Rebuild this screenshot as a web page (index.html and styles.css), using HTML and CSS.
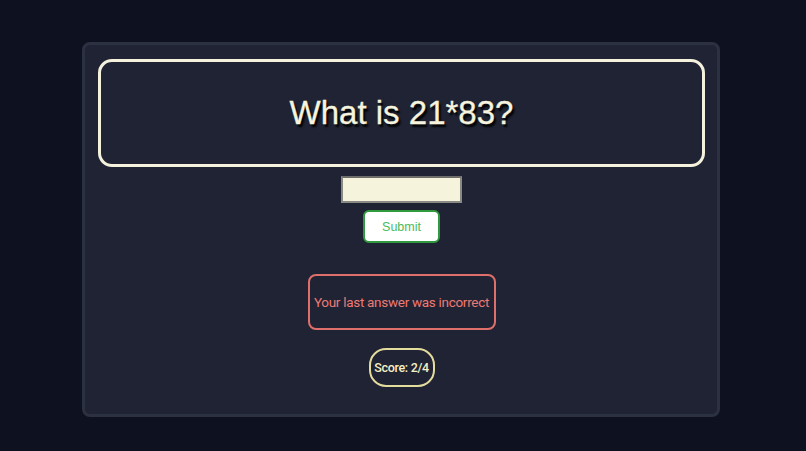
FILE: index.html
```html
<!DOCTYPE html>
<html>
<head>
<meta charset="utf-8">
<link rel="stylesheet" href="styles.css">
</head>
<body>
<main class="card">
  <div class="question"><h1>What is 21*83?</h1></div>
  <input class="answer" type="text">
  <button class="submit">Submit</button>
  <div class="feedback">Your last answer was incorrect</div>
  <div class="score">Score: 2/4</div>
</main>
</body>
</html>
```
FILE: styles.css
```css
html, body {
  margin: 0;
  padding: 0;
  background: #0e1120;
  height: 100%;
}
body {
  padding-top: 42px;
  box-sizing: border-box;
}
.card {
  box-sizing: border-box;
  width: 638px;
  height: 375px;
  margin: 0 0 0 82px;
  background: #1f2334;
  border: 3px solid #2c3142;
  border-radius: 8px;
  padding: 14px 12px 0 13px;
  display: flex;
  flex-direction: column;
  align-items: center;
}
.question {
  box-sizing: border-box;
  width: 607px;
  height: 108px;
  border: 3px solid #f4f1dc;
  border-radius: 14px;
  display: flex;
  align-items: center;
  justify-content: center;
}
.question h1 {
  margin: 0;
  font-family: "Liberation Sans", Arial, sans-serif;
  font-weight: normal;
  font-size: 33px;
  color: #f6f3de;
  text-shadow: 2px 3px 2px #000;
  -webkit-text-stroke: 0.3px #f6f3de;
}
.answer {
  box-sizing: border-box;
  margin-top: 9px;
  width: 121px;
  height: 27px;
  background: #f6f3dc;
  border: 2px solid #8a8a84;
  border-top-color: #6e6e6a;
  padding: 0 4px;
}
.submit {
  box-sizing: border-box;
  margin-top: 7px;
  width: 77px;
  height: 33px;
  background: #fff;
  border: 2px solid #2f9a3e;
  border-radius: 6px;
  color: #4cbb5a;
  font-family: "Liberation Sans", Arial, sans-serif;
  font-size: 12.5px;
}
.feedback {
  box-sizing: border-box;
  margin-top: 31px;
  width: 188px;
  height: 56px;
  border: 2px solid #de6f6b;
  border-radius: 8px;
  display: flex;
  align-items: center;
  justify-content: center;
  white-space: nowrap;
  color: #ee7a73;
  font-family: Roboto, "Noto Sans", sans-serif;
  font-size: 13.5px;
  letter-spacing: -0.3px;
}
.score {
  box-sizing: border-box;
  margin-top: 18px;
  width: 66px;
  height: 39px;
  border: 2px solid #e3dc9c;
  border-radius: 17px;
  display: flex;
  align-items: center;
  justify-content: center;
  white-space: nowrap;
  color: #f4efc2;
  font-family: Roboto, "Noto Sans", sans-serif;
  font-weight: 500;
  font-size: 12.5px;
  letter-spacing: -0.3px;
}
```
